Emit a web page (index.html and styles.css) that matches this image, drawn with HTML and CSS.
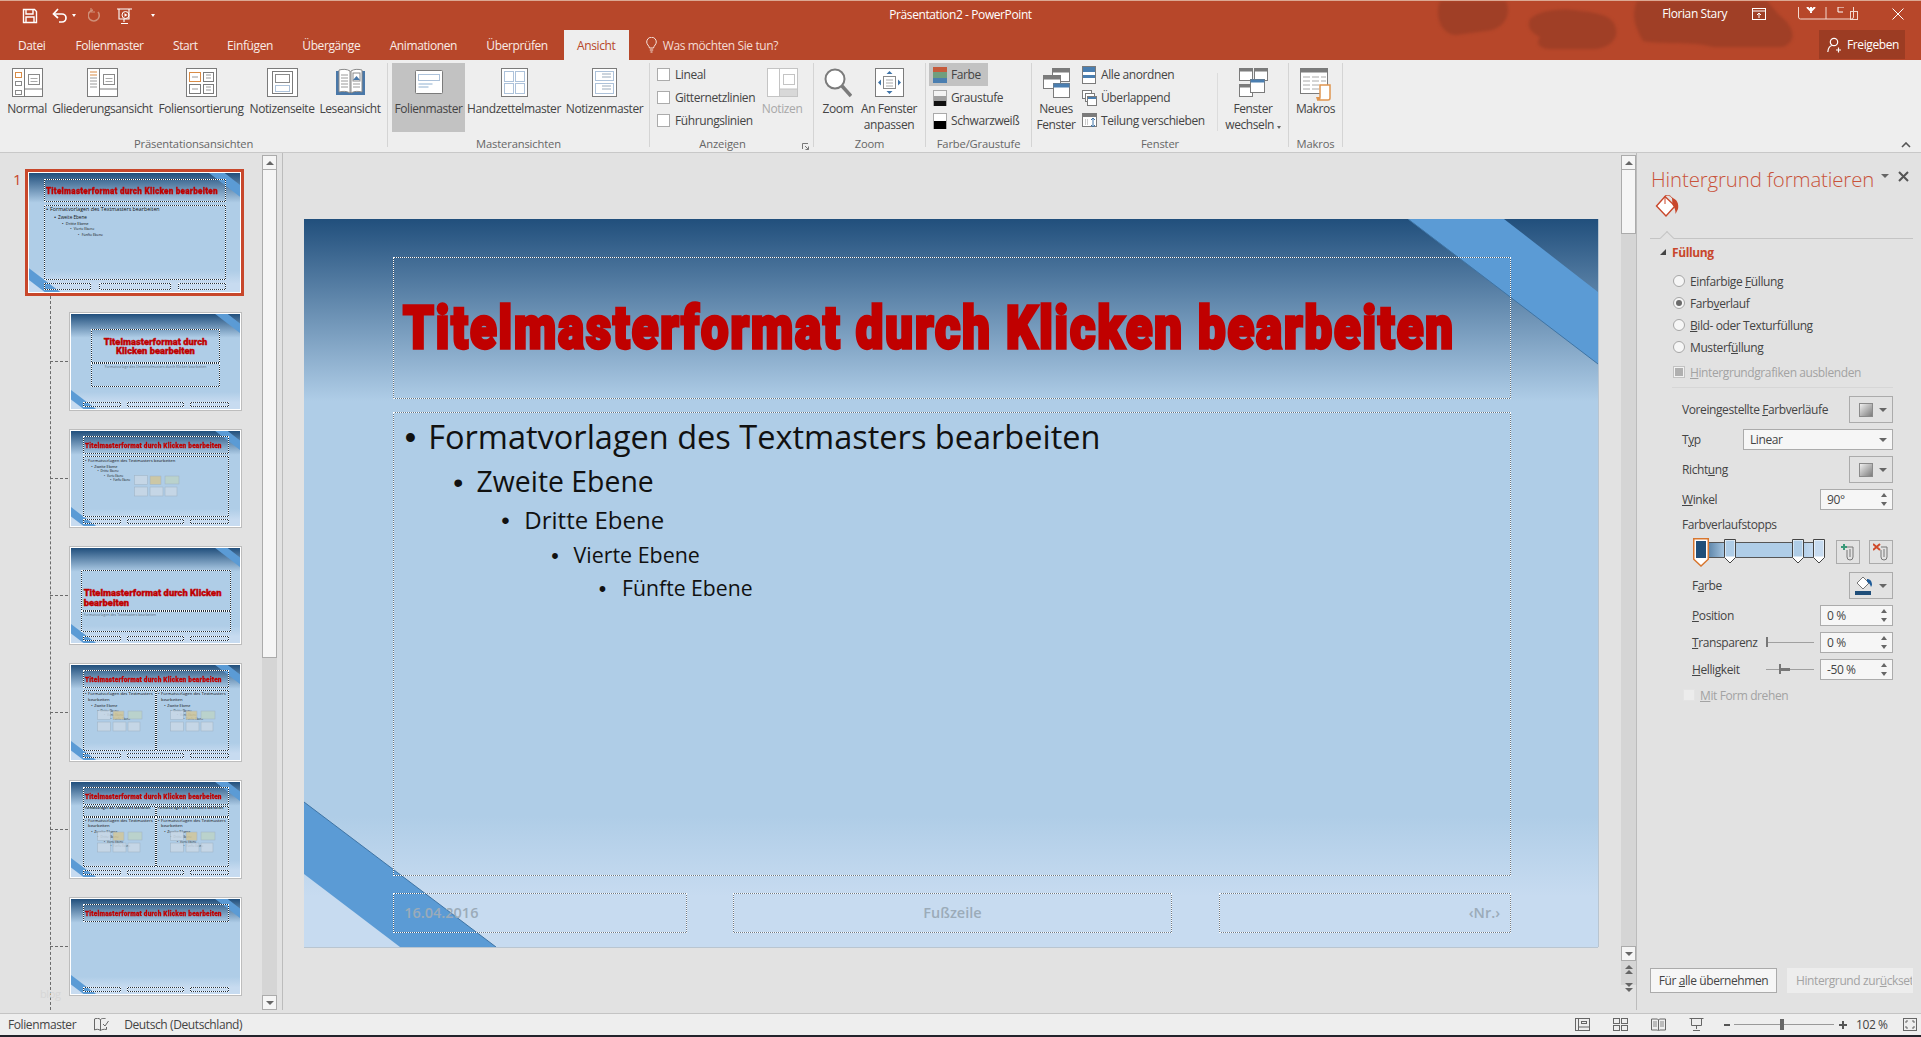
FILE: index.html
```html
<!DOCTYPE html>
<html lang="de">
<head>
<meta charset="utf-8">
<title>Präsentation2 - PowerPoint</title>
<link rel="stylesheet" href="styles.css">
</head>
<body>
<svg class="defs" width="0" height="0">
  <symbol id="ct" viewBox="0 0 46 22">
    <g fill="#c9d8e6" stroke="#9fb2c4" stroke-width=".6"><rect x=".5" y=".5" width="13" height="9"/><rect x="16" y="1" width="11" height="8.5" fill="#d2c79a"/><rect x="31" y="1" width="14" height="8" fill="#bcd3c8"/><rect x=".5" y="12" width="13" height="9"/><rect x="16" y="12" width="13" height="9"/><rect x="31" y="12" width="12" height="9"/></g>
  </symbol>
  <symbol id="bgico" viewBox="0 0 14 14"><defs><linearGradient id="gg" x1="0" y1="0" x2="1" y2="1"><stop offset="0" stop-color="#f4f4f4"/><stop offset="1" stop-color="#777"/></linearGradient></defs><rect x=".5" y=".5" width="13" height="13" fill="url(#gg)" stroke="#8a8a8a"/></symbol>
</svg>
<div class="app">
  <header class="titlebar">
    <svg class="clouds" viewBox="0 0 500 60" width="500" height="60"><g fill="#a03f26"><path d="M20 0h66c6 14-2 28-20 30L36 34C22 34 14 16 20 0z"/><path d="M110 18c8-8 30-12 50-8 22 2 34 6 36 18 2 10-6 18-20 20H128c-10-2-12-6-8-12-8-4-14-10-10-18z"/><path d="M217 0h130l12 14c14 10 20 26 4 32h-70c-20-6-50-2-70-6-8-14-12-26-6-40z"/></g></svg>
    <div class="row1">
      <div class="qat">
        <svg width="16" height="16" viewBox="0 0 16 16" class="q1"><path d="M1.500 1.500h11l2 2v11h-13z" fill="none" stroke="#fff" stroke-width="1.400"/><path d="M4 2v4h7V2M4 14.500V9h8v5.500" fill="none" stroke="#fff" stroke-width="1.400"/></svg>
        <svg width="16" height="15" viewBox="0 0 16 15" class="q2"><path d="M2 6h8a4 4 0 0 1 0 8H7" fill="none" stroke="#fff" stroke-width="1.700"/><path d="M6 1L1.500 6 6 10" fill="none" stroke="#fff" stroke-width="1.700"/></svg>
        <i class="tri w tiny q3"></i>
        <svg width="13" height="15" viewBox="0 0 13 15" class="q4"><path d="M10 4a5.500 5.500 0 1 1-5-2" fill="none" stroke="#cf8f78" stroke-width="1.600"/><path d="M3 0v4h4" fill="none" stroke="#cf8f78" stroke-width="1.200"/></svg>
        <svg width="18" height="18" viewBox="0 0 18 18" class="q5"><path d="M1 2h15M3 2v10h10V2M8 12v3M5 16.500h7" fill="none" stroke="#fff" stroke-width="1.100"/><circle cx="9.500" cy="8" r="3.500" fill="none" stroke="#fff"/><path d="M8.500 6.200L11.500 8l-3 1.800z" fill="#fff"/></svg>
        <i class="tri w tiny q6"></i>
      </div>
      <div class="doc-title">Präsentation2 - PowerPoint</div>
      <div class="account">
        <span class="user">Florian Stary</span>
        <svg width="14" height="12" viewBox="0 0 14 12" class="disp"><rect x=".5" y=".5" width="13" height="11" fill="none" stroke="#fff"/><path d="M.5 3h13M7 10V5M5 7l2-2 2 2" fill="none" stroke="#fff"/></svg>
        <svg width="70" height="14" viewBox="0 0 70 14" class="winc"><rect x=".5" y="-6" width="55" height="18" rx="2" fill="none" stroke="#f3d9cf"/><path d="M28 -2v14" stroke="#f3d9cf"/><path d="M13 0v6M9 0l4 4 4-4" stroke="#fff" stroke-width="2" fill="none"/><path d="M40 5V0h6M40 5h5" stroke="#fff" fill="none"/><rect x="52.500" y="4.500" width="7" height="8" fill="none" stroke="#f3d9cf"/></svg>
        <svg width="12" height="12" viewBox="0 0 12 12" class="closex"><path d="M.5.5l11 11M11.500.5l-11 11" stroke="#fff" fill="none"/></svg>
      </div>
    </div>
    <nav class="tabs">
      <span class="tab t-first">Datei</span>
      <span class="tab t-fm">Folienmaster</span>
      <span class="tab">Start</span>
      <span class="tab">Einfügen</span>
      <span class="tab">Übergänge</span>
      <span class="tab">Animationen</span>
      <span class="tab">Überprüfen</span>
      <span class="tab on">Ansicht</span>
      <span class="tell">
        <svg width="11" height="16" viewBox="0 0 11 16"><path d="M3.500 11C3 8.500.7 7.500.7 5a4.800 4.800 0 0 1 9.600 0c0 2.500-2.300 3.500-2.800 6zM3.800 13h3.400M4.500 15h2" fill="none" stroke="#f7e5de"/></svg>
        Was möchten Sie tun?
      </span>
      <span class="share">
        <svg width="15" height="16" viewBox="0 0 15 16"><circle cx="7" cy="5" r="3.700" fill="none" stroke="#fff" stroke-width="1.200"/><path d="M.8 15c.4-4 2.500-6.500 5-6.500M11.500 10.500v5M9 13h5" fill="none" stroke="#fff" stroke-width="1.200"/></svg>
        Freigeben
      </span>
    </nav>
  </header>

  <section class="ribbon">
    <div class="grp g1">
      <div class="grp-body cols c1">
        <div class="cmd"><svg class="ic" width="31" height="29" viewBox="0 0 31 29"><rect x=".5" y=".5" width="30" height="28" fill="#fff" stroke="#7b7b7b"/><path d="M12.500.5v28M12.500 21h18" stroke="#7b7b7b" fill="none"/><rect x="3.500" y="4.500" width="6" height="5" fill="none" stroke="#d98b45"/><rect x="3.500" y="13.500" width="6" height="4" fill="none" stroke="#8a8a8a"/><rect x="3.500" y="22.500" width="6" height="4" fill="none" stroke="#8a8a8a"/><rect x="16.500" y="6.500" width="11" height="10" fill="none" stroke="#8a8a8a"/><path d="M18.500 10.500h7M18.500 13.500h7" stroke="#aaa"/></svg><span>Normal</span></div>
        <div class="cmd"><svg class="ic" width="31" height="29" viewBox="0 0 31 29"><rect x=".5" y=".5" width="30" height="28" fill="#fff" stroke="#7b7b7b"/><path d="M12.500.5v28M12.500 21h18" stroke="#7b7b7b" fill="none"/><path d="M3 4h7M3 7h7" stroke="#d98b45"/><path d="M3 10h7M3 13h7M3 16h7M3 19h7" stroke="#9a9a9a"/><rect x="16.500" y="6.500" width="11" height="10" fill="none" stroke="#8a8a8a"/><path d="M18.500 10.500h7M18.500 13.500h7" stroke="#aaa"/></svg><span>Gliederungsansicht</span></div>
        <div class="cmd"><svg class="ic" width="31" height="29" viewBox="0 0 31 29"><rect x=".5" y=".5" width="30" height="28" fill="#fff" stroke="#7b7b7b"/><rect x="3.500" y="4.500" width="11" height="9" fill="none" stroke="#d98b45"/><rect x="17.500" y="4.500" width="10" height="9" fill="none" stroke="#7b7b7b"/><rect x="3.500" y="16.500" width="11" height="9" fill="none" stroke="#7b7b7b"/><rect x="17.500" y="16.500" width="10" height="9" fill="none" stroke="#7b7b7b"/><path d="M6 9h6M20 7h5M20 10h5M6 21h6M20 19h5M20 22h5" stroke="#999"/></svg><span>Foliensortierung</span></div>
        <div class="cmd"><svg class="ic" width="31" height="29" viewBox="0 0 31 29"><rect x=".5" y=".5" width="30" height="28" fill="#fff" stroke="#7b7b7b"/><rect x="5.500" y="3.500" width="20" height="22" fill="#fff" stroke="#7b7b7b"/><rect x="8.500" y="6.500" width="14" height="8" fill="none" stroke="#8a8a8a"/><path d="M8.500 17.500h14v6h-14z" fill="none" stroke="#5a85b5" stroke-dasharray="1 1"/></svg><span>Notizenseite</span></div>
        <div class="cmd"><svg class="ic" width="31" height="29" viewBox="0 0 31 29"><path d="M1 3h3v21h23V3h3v24H1z" fill="#4a78a8"/><path d="M4 2c4-1 8-1 11 1v22c-3-2-7-2-11-1zM16 3c3-2 7-2 11-1v22c-4-1-8-1-11 1z" fill="#fff" stroke="#8a8a8a"/><path d="M6 7h7M6 10h7M6 13h7M6 16h7M6 19h7M18 16h7M18 19h7" stroke="#9a9a9a"/><rect x="18" y="5" width="7" height="8" fill="#fff" stroke="#8a8a8a"/><path d="M18 12l3.500-4 3.500 4z" fill="#4a78a8"/></svg><span>Leseansicht</span></div>
      </div>
      <div class="grp-label">Präsentationsansichten</div>
    </div>

    <div class="grp g2">
      <div class="grp-body cols c2">
        <div class="cmd sel"><svg class="ic small" width="28" height="24" viewBox="0 0 28 24"><rect x=".5" y=".5" width="27" height="23" rx="1" fill="#fff" stroke="#7b7b7b"/><rect x="3.500" y="4.500" width="21" height="6" fill="none" stroke="#5a85b5" stroke-dasharray="1 1"/><path d="M3.500 14h14M3.500 17h10" stroke="#8fb0d0"/></svg><span>Folienmaster</span></div>
        <div class="cmd"><svg class="ic" width="27" height="29" viewBox="0 0 27 29"><rect x=".5" y=".5" width="26" height="28" fill="#fff" stroke="#7b7b7b"/><path d="M3.500 3.500h9v10h-9zM14.500 3.500h9v10h-9zM3.500 15.500h9v10h-9zM14.500 15.500h9v10h-9z" fill="none" stroke="#5a85b5" stroke-dasharray="1 1"/></svg><span>Handzettelmaster</span></div>
        <div class="cmd"><svg class="ic" width="25" height="29" viewBox="0 0 25 29"><rect x=".5" y=".5" width="24" height="28" fill="#fff" stroke="#7b7b7b"/><path d="M3.500 3.500h18v9h-18zM3.500 15.500h18v10h-18z" fill="none" stroke="#5a85b5" stroke-dasharray="1 1"/><path d="M10 6h9M10 9h9M10 18h9M10 21h9" stroke="#9ab"/></svg><span>Notizenmaster</span></div>
      </div>
      <div class="grp-label">Masteransichten</div>
    </div>

    <div class="grp g3">
      <div class="grp-body show">
        <div class="stack">
          <div class="li"><i class="cb"></i>Lineal</div>
          <div class="li"><i class="cb"></i>Gitternetzlinien</div>
          <div class="li"><i class="cb"></i>Führungslinien</div>
        </div>
        <div class="cmd off wn"><svg class="ic" width="31" height="29" viewBox="0 0 31 29"><rect x=".5" y=".5" width="30" height="28" fill="#fff" stroke="#c4c4c4"/><path d="M12.500.5v28" stroke="#c4c4c4"/><rect x="12.500" y="21" width="18" height="7.500" fill="#d8d8d8" stroke="#c4c4c4"/><rect x="16.500" y="6.500" width="11" height="10" fill="none" stroke="#c4c4c4"/></svg><span>Notizen</span></div>
      </div>
      <div class="grp-label lbl-3">Anzeigen<svg class="launch" width="7" height="7" viewBox="0 0 7 7"><path d="M.5 6V.5H6M3 3l3.500 3.500M6.500 3.500v3h-3" fill="none" stroke="#777"/></svg></div>
    </div>

    <div class="grp g4">
      <div class="grp-body cols c4">
        <div class="cmd"><svg class="ic" width="28" height="30" viewBox="0 0 28 30"><circle cx="11" cy="11" r="9.500" fill="#fff" stroke="#7b7b7b" stroke-width="2"/><path d="M18 18l9 10" stroke="#7b7b7b" stroke-width="3.500"/></svg><span>Zoom</span></div>
        <div class="cmd"><svg class="ic" width="29" height="29" viewBox="0 0 29 29"><rect x=".5" y=".5" width="28" height="28" fill="#fff" stroke="#7b7b7b"/><rect x="8.500" y="8.500" width="12" height="12" fill="none" stroke="#8a8a8a"/><path d="M11 12h7M11 15h7M11 18h7" stroke="#aaa"/><path d="M14.500 3l3 3h-6zM14.500 26l3-3h-6zM3 14.500l3-3v6zM26 14.500l-3-3v6z" fill="#3f74a8"/></svg><span>An Fenster<br>anpassen</span></div>
      </div>
      <div class="grp-label">Zoom</div>
    </div>

    <div class="grp g5">
      <div class="grp-body stack cstack">
        <div class="li pick on"><i class="sw sw-col"></i>Farbe</div>
        <div class="li pick"><i class="sw sw-gray"></i>Graustufe</div>
        <div class="li pick"><i class="sw sw-bw"></i>Schwarzweiß</div>
      </div>
      <div class="grp-label">Farbe/Graustufe</div>
    </div>

    <div class="grp g6">
      <div class="grp-body win">
        <div class="cmd wnf"><svg class="ic" width="27" height="30" viewBox="0 0 27 30"><rect x="9.500" y=".5" width="17" height="13" fill="#fff" stroke="#7b7b7b"/><rect x="9.500" y=".5" width="17" height="4" fill="#7b7b7b"/><rect x=".5" y="7.500" width="17" height="13" fill="#fff" stroke="#7b7b7b"/><rect x=".5" y="7.500" width="17" height="4" fill="#7b7b7b"/><rect x="10.500" y="15.500" width="16" height="14" fill="#fff" stroke="#7b7b7b"/><rect x="10.500" y="15.500" width="16" height="4" fill="#4a7eb0"/></svg><span>Neues<br>Fenster</span></div>
        <div class="stack wstack">
          <div class="li"><svg class="mi" width="14" height="18" viewBox="0 0 14 18"><rect x=".5" y=".5" width="13" height="17" fill="#fff" stroke="#7b7b7b"/><rect x="1" y="1" width="12" height="5" fill="#4a7eb0"/><rect x="1" y="9" width="12" height="3" fill="#4a7eb0"/></svg>Alle anordnen</div>
          <div class="li"><svg class="mi" width="15" height="16" viewBox="0 0 15 16"><rect x=".5" y=".5" width="9" height="8" fill="#fff" stroke="#7b7b7b"/><rect x="3.500" y="3.500" width="9" height="8" fill="#fff" stroke="#7b7b7b"/><rect x="5.500" y="6.500" width="9" height="9" fill="#fff" stroke="#7b7b7b"/><rect x="6" y="7" width="8" height="2" fill="#4a7eb0"/></svg>Überlappend</div>
          <div class="li"><svg class="mi" width="15" height="15" viewBox="0 0 15 15"><rect x=".5" y=".5" width="14" height="13" fill="#fff" stroke="#7b7b7b"/><rect x="1" y="1" width="13" height="3" fill="#7b7b7b"/><path d="M3 7h4M3 9h3M3 11h4" stroke="#9a9a9a" stroke-dasharray="1 1"/><path d="M11 5v9M9 7l2-2 2 2M9 12l2 2 2-2" stroke="#3f74a8" fill="none"/></svg>Teilung verschieben</div>
        </div>
        <i class="short-sep"></i>
        <div class="cmd wsw"><svg class="ic" width="29" height="29" viewBox="0 0 29 29"><rect x=".5" y=".5" width="13" height="12" fill="#fff" stroke="#7b7b7b"/><rect x=".5" y=".5" width="13" height="3" fill="#7b7b7b"/><rect x="15.500" y=".5" width="13" height="12" fill="#fff" stroke="#7b7b7b"/><rect x="15.500" y=".5" width="13" height="3" fill="#7b7b7b"/><rect x=".5" y="16.500" width="13" height="12" fill="#fff" stroke="#7b7b7b"/><rect x=".5" y="16.500" width="13" height="3" fill="#7b7b7b"/><rect x="11.500" y="11.500" width="14" height="13" fill="#fff" stroke="#7b7b7b"/><rect x="11.500" y="11.500" width="14" height="3" fill="#4a7eb0"/></svg><span>Fenster<br>wechseln <i class="tri tiny"></i></span></div>
      </div>
      <div class="grp-label">Fenster</div>
    </div>

    <div class="grp g7">
      <div class="grp-body cols c7">
        <div class="cmd"><svg class="ic" width="32" height="33" viewBox="0 0 32 33"><rect x=".5" y=".5" width="27" height="25" fill="#fff" stroke="#7b7b7b"/><rect x=".5" y=".5" width="27" height="4" fill="#7b7b7b"/><path d="M3 9h7M12 9h7M21 9h5M3 13h7M12 13h7M21 13h5M3 17h7M12 17h7M3 21h7M12 21h7" stroke="#aaa"/><path d="M20 17h10v13a2 2 0 0 1-2 2H17a3 3 0 0 0 3-3z" fill="#fff" stroke="#e0954f" stroke-width="1.500"/><path d="M16 29h4v3h-3z" fill="#e0954f"/></svg><span>Makros</span></div>
      </div>
      <div class="grp-label">Makros</div>
    </div>
    <svg class="collapse" width="10" height="6" viewBox="0 0 10 6"><path d="M1 5l4-4 4 4" fill="none" stroke="#555" stroke-width="1.600"/></svg>
  </section>

  <main class="work">
    <aside class="slides">
      <i class="tree"></i>
      <span class="ghost">blog</span>
      <div class="master-row">
        <span class="num">1</span>
        <div class="thumb-m">
          <div class="slide big">
            <svg class="deco" viewBox="0 0 1294 728" preserveAspectRatio="none"><path d="M1104 0h96l94 73v72z" fill="#5b9bd5"/><path d="M0 583l192 145H96L0 655z" fill="#5b9bd5"/></svg>
            <div class="ph p-title"><b class="ttl">Titelmasterformat durch Klicken bearbeiten</b></div>
            <div class="ph p-body"><div class="lv l1">Formatvorlagen des Textmasters bearbeiten</div><div class="lv l2">Zweite Ebene</div><div class="lv l3">Dritte Ebene</div><div class="lv l4">Vierte Ebene</div><div class="lv l5">Fünfte Ebene</div></div>
            <div class="ph p-date"></div><div class="ph p-foot"></div><div class="ph p-nr"></div>
          </div>
        </div>
      </div>

      <div class="thumb t-2">
        <div class="slide sm">
          <svg class="deco" viewBox="0 0 1294 728" preserveAspectRatio="none"><path d="M1104 0h96l94 73v72z" fill="#5b9bd5"/><path d="M0 583l192 145H96L0 655z" fill="#5b9bd5"/></svg>
          <div class="ph tt-title center"><b class="ttl">Titelmasterformat durch Klicken bearbeiten</b></div>
          <div class="ph tt-sub center"><span class="sub">Formatvorlage des Untertitelmasters durch Klicken bearbeiten</span></div>
          <div class="ph p-date"></div><div class="ph p-foot"></div><div class="ph p-nr"></div>
        </div>
      </div>

      <div class="thumb">
        <div class="slide sm">
          <svg class="deco" viewBox="0 0 1294 728" preserveAspectRatio="none"><path d="M1104 0h96l94 73v72z" fill="#5b9bd5"/><path d="M0 583l192 145H96L0 655z" fill="#5b9bd5"/></svg>
          <div class="ph p-title"><b class="ttl">Titelmasterformat durch Klicken bearbeiten</b></div>
          <div class="ph p-body"><div class="lv l1">Formatvorlagen des Textmasters bearbeiten</div><div class="lv l2">Zweite Ebene</div><div class="lv l3">Dritte Ebene</div><div class="lv l4">Vierte Ebene</div><div class="lv l5">Fünfte Ebene</div></div>
          <svg class="cticons one"><use href="#ct"/></svg>
          <div class="ph p-date"></div><div class="ph p-foot"></div><div class="ph p-nr"></div>
        </div>
      </div>

      <div class="thumb">
        <div class="slide sm">
          <svg class="deco" viewBox="0 0 1294 728" preserveAspectRatio="none"><path d="M1104 0h96l94 73v72z" fill="#5b9bd5"/><path d="M0 583l192 145H96L0 655z" fill="#5b9bd5"/></svg>
          <div class="ph sec-title"><b class="ttl">Titelmasterformat durch Klicken bearbeiten</b></div>
          <div class="ph sec-body"><span class="sub">Formatvorlagen des Textmasters bearbeiten</span></div>
          <div class="ph p-date"></div><div class="ph p-foot"></div><div class="ph p-nr"></div>
        </div>
      </div>

      <div class="thumb">
        <div class="slide sm">
          <svg class="deco" viewBox="0 0 1294 728" preserveAspectRatio="none"><path d="M1104 0h96l94 73v72z" fill="#5b9bd5"/><path d="M0 583l192 145H96L0 655z" fill="#5b9bd5"/></svg>
          <div class="ph p-title"><b class="ttl">Titelmasterformat durch Klicken bearbeiten</b></div>
          <div class="ph two-l"><div class="lv l1">Formatvorlagen des Textmasters bearbeiten</div><div class="lv l2">Zweite Ebene</div><div class="lv l3">Dritte Ebene</div><div class="lv l4">Vierte Ebene</div><div class="lv l5">Fünfte Ebene</div></div>
          <div class="ph two-r"><div class="lv l1">Formatvorlagen des Textmasters bearbeiten</div><div class="lv l2">Zweite Ebene</div><div class="lv l3">Dritte Ebene</div><div class="lv l4">Vierte Ebene</div><div class="lv l5">Fünfte Ebene</div></div>
          <svg class="cticons ctl"><use href="#ct"/></svg><svg class="cticons ctr"><use href="#ct"/></svg>
          <div class="ph p-date"></div><div class="ph p-foot"></div><div class="ph p-nr"></div>
        </div>
      </div>

      <div class="thumb">
        <div class="slide sm">
          <svg class="deco" viewBox="0 0 1294 728" preserveAspectRatio="none"><path d="M1104 0h96l94 73v72z" fill="#5b9bd5"/><path d="M0 583l192 145H96L0 655z" fill="#5b9bd5"/></svg>
          <div class="ph p-title"><b class="ttl">Titelmasterformat durch Klicken bearbeiten</b></div>
          <div class="ph cmp-hl"><span class="cmph">Formatvorlagen des Textmasters bearbeiten</span></div>
          <div class="ph cmp-hr"><span class="cmph">Formatvorlagen des Textmasters bearbeiten</span></div>
          <div class="ph cmp-l"><div class="lv l1">Formatvorlagen des Textmasters bearbeiten</div><div class="lv l2">Zweite Ebene</div><div class="lv l3">Dritte Ebene</div><div class="lv l4">Vierte Ebene</div><div class="lv l5">Fünfte Ebene</div></div>
          <div class="ph cmp-r"><div class="lv l1">Formatvorlagen des Textmasters bearbeiten</div><div class="lv l2">Zweite Ebene</div><div class="lv l3">Dritte Ebene</div><div class="lv l4">Vierte Ebene</div><div class="lv l5">Fünfte Ebene</div></div>
          <svg class="cticons ctl2"><use href="#ct"/></svg><svg class="cticons ctr2"><use href="#ct"/></svg>
          <div class="ph p-date"></div><div class="ph p-foot"></div><div class="ph p-nr"></div>
        </div>
      </div>

      <div class="thumb">
        <div class="slide sm">
          <svg class="deco" viewBox="0 0 1294 728" preserveAspectRatio="none"><path d="M1104 0h96l94 73v72z" fill="#5b9bd5"/><path d="M0 583l192 145H96L0 655z" fill="#5b9bd5"/></svg>
          <div class="ph p-title"><b class="ttl">Titelmasterformat durch Klicken bearbeiten</b></div>
          <div class="ph p-date"></div><div class="ph p-foot"></div><div class="ph p-nr"></div>
        </div>
      </div>
    </aside>

    <div class="vscroll vs1">
      <span class="sb up"><i class="tri up-t"></i></span>
      <span class="thumbbar th1"></span>
      <span class="sb dn"><i class="tri"></i></span>
    </div>

    <div class="editor">
      <div class="slide main-slide">
        <svg class="deco" viewBox="0 0 1294 728" preserveAspectRatio="none"><path d="M1104 0h96l94 73v72z" fill="#5b9bd5"/><path d="M1104 0l190 145" stroke="#3f74a4" fill="none"/><path d="M0 583l192 145H96L0 655z" fill="#5b9bd5"/><path d="M0 583l192 145" stroke="#3f74a4" fill="none"/></svg>
        <div class="ph p-title"><b class="ttl">Titelmasterformat durch Klicken bearbeiten</b></div>
        <div class="ph p-body"><div class="lv l1">Formatvorlagen des Textmasters bearbeiten</div><div class="lv l2">Zweite Ebene</div><div class="lv l3">Dritte Ebene</div><div class="lv l4">Vierte Ebene</div><div class="lv l5">Fünfte Ebene</div></div>
        <div class="ph p-date ftxt"><span>16.04.2016</span></div>
        <div class="ph p-foot ftxt mid"><span>Fußzeile</span></div>
        <div class="ph p-nr ftxt end"><span>‹Nr.›</span></div>
      </div>
    </div>

    <div class="vscroll vs2">
      <span class="sb up"><i class="tri up-t"></i></span>
      <span class="thumbbar th2"></span>
      <span class="sb dn"><i class="tri"></i></span>
      <span class="dbl"><i class="tri up-t"></i><i class="tri up-t"></i></span>
      <span class="dbl"><i class="tri"></i><i class="tri"></i></span>
    </div>

    <aside class="pane">
      <div class="pane-head"><span class="pane-title">Hintergrund formatieren</span><i class="tri pt"></i>
        <svg width="11" height="11" viewBox="0 0 11 11" class="pane-x"><path d="M1 1l9 9M10 1l-9 9" stroke="#555" stroke-width="2"/></svg></div>
      <svg class="bucket" width="26" height="24" viewBox="0 0 26 24"><path d="M10 1.500L1.500 11 11 21l9-10z" fill="#fff" stroke="#c8472b" stroke-width="1.400"/><path d="M10 1v8M10 1c3-2 6 0 8 3" fill="none" stroke="#c8472b"/><path d="M17 3c5 1 7 6 6 11l-2.500 5c0-4-.5-6-3-9z" fill="#c8472b"/></svg>
      <div class="tabline"></div>
      <div class="sect"><i class="corner"></i>Füllung</div>
      <div class="opts">
        <div class="opt"><i class="radio"></i><span>Einfarbige <u>F</u>üllung</span></div>
        <div class="opt"><i class="radio chk"></i><span>Farb<u>v</u>erlauf</span></div>
        <div class="opt"><i class="radio"></i><span><u>B</u>ild- oder Texturfüllung</span></div>
        <div class="opt"><i class="radio"></i><span>Musterf<u>ü</u>llung</span></div>
        <div class="opt dis chk-row"><i class="dcb"></i><span><u>H</u>intergrundgrafiken ausblenden</span></div>
      </div>
      <div class="pane-div"></div>
      <div class="row rb r-first"><span>Voreingestellte <u>F</u>arbverläufe</span><span class="pbtn"><svg width="14" height="14"><use href="#bgico"/></svg><i class="tri"></i></span></div>
      <div class="row rs"><span>T<u>y</u>p</span><span class="combo">Linear<i class="tri"></i></span></div>
      <div class="row rb"><span>Richt<u>u</u>ng</span><span class="pbtn"><svg width="14" height="14"><use href="#bgico"/></svg><i class="tri"></i></span></div>
      <div class="row rs"><span><u>W</u>inkel</span><span class="spin">90°<i class="arrows"><i class="tri up-t"></i><i class="tri"></i></i></span></div>
      <div class="row rl">Farbverlaufstopps</div>
      <div class="stops">
        <div class="bar"></div>
        <svg class="stop s1" width="16" height="29" viewBox="0 0 16 29"><path d="M.75.750h14.500v20.500L8 28 .75 21.250z" fill="#fff" stroke="#d8762e" stroke-width="1.500"/><rect x="3" y="3" width="10" height="17" fill="#1f4e79"/></svg>
        <svg class="stop s2" width="12" height="25" viewBox="0 0 12 25"><path d="M.5.500h11v18L6 24 .5 18.500z" fill="#fff" stroke="#444"/><rect x="1.500" y="1.500" width="9" height="16" fill="#afcde7"/></svg>
        <svg class="stop s3" width="12" height="25" viewBox="0 0 12 25"><path d="M.5.500h11v18L6 24 .5 18.500z" fill="#fff" stroke="#444"/><rect x="1.500" y="1.500" width="9" height="16" fill="#afcde7"/></svg>
        <svg class="stop s4" width="12" height="25" viewBox="0 0 12 25"><path d="M.5.500h11v18L6 24 .5 18.500z" fill="#fff" stroke="#444"/><rect x="1.500" y="1.500" width="9" height="16" fill="#c7dbf0"/></svg>
        <span class="clipbtn b-add"><svg width="16" height="18" viewBox="0 0 16 18"><path d="M7 4h6v10a3 3 0 0 1-6 0V7M10 6v8" fill="none" stroke="#777"/><path d="M1 4h6M4 1v6" stroke="#3a9a7a" stroke-width="2"/></svg></span>
        <span class="clipbtn b-del"><svg width="16" height="18" viewBox="0 0 16 18"><path d="M8 4h6v10a3 3 0 0 1-6 0V7M11 6v8" fill="none" stroke="#777"/><path d="M0 1l7 6M7 1L0 7" stroke="#d04a2a" stroke-width="2"/></svg></span>
      </div>
      <div class="row rb ind"><span>F<u>a</u>rbe</span><span class="pbtn"><svg width="18" height="20" viewBox="0 0 18 20"><path d="M8 1L2 7l6 6 6-6z" fill="#fff" stroke="#777"/><path d="M12 3c3 0 5 2 5 6l-1 2c-1-3-2-4-4-5z" fill="#1f5c99"/><rect x="0" y="15" width="16" height="4" fill="#1f4e79"/></svg><i class="tri"></i></span></div>
      <div class="row rs ind"><span><u>P</u>osition</span><span class="spin">0 %<i class="arrows"><i class="tri up-t"></i><i class="tri"></i></i></span></div>
      <div class="row rs ind"><span><u>T</u>ransparenz</span><span class="sl-wrap"><i class="slider"><i class="knob k0"></i></i><span class="spin">0 %<i class="arrows"><i class="tri up-t"></i><i class="tri"></i></i></span></span></div>
      <div class="row rs ind"><span><u>H</u>elligkeit</span><span class="sl-wrap"><i class="slider"><i class="fillbar"></i><i class="knob k1"></i></i><span class="spin">-50 %<i class="arrows"><i class="tri up-t"></i><i class="tri"></i></i></span></span></div>
      <div class="row rm dis"><i class="dcb2"></i><span><u>M</u>it Form drehen</span></div>
      <div class="pane-foot">
        <span class="btn"><span>Für <u>a</u>lle übernehmen</span></span>
        <span class="btn dbtn"><span>Hintergrund zur<u>ü</u>cksetzen</span></span>
      </div>
    </aside>
  </main>

  <footer class="status">
    <span class="st-l">Folienmaster</span>
    <svg class="st-book" width="15" height="13" viewBox="0 0 15 13"><path d="M.5 1c2-1 4-1 6 .5v11c-2-1.500-4-1.500-6-.5zM6.500 1.500c1-1 3-1.500 5-1" fill="none" stroke="#666"/><path d="M9 6l2 2 3.500-5M6.500 12.500c1.500-1 3-1.500 6-1V9" fill="none" stroke="#666"/></svg>
    <span class="st-lang">Deutsch (Deutschland)</span>
    <span class="st-right">
      <svg width="15" height="13" viewBox="0 0 15 13"><rect x=".5" y=".5" width="14" height="12" fill="none" stroke="#666"/><path d="M3.500.5v12M3.500 9h11" stroke="#666"/><rect x="6.500" y="3.500" width="5" height="2" fill="none" stroke="#666"/></svg>
      <svg width="15" height="13" viewBox="0 0 15 13" class="si2"><rect x=".5" y=".5" width="6" height="5" fill="none" stroke="#666"/><rect x="8.500" y=".5" width="6" height="5" fill="none" stroke="#666"/><rect x=".5" y="7.500" width="6" height="5" fill="none" stroke="#666"/><rect x="8.500" y="7.500" width="6" height="5" fill="none" stroke="#666"/></svg>
      <svg width="15" height="13" viewBox="0 0 15 13" class="si2"><path d="M.5 1h6l1 1 1-1h6v11h-6l-1 1-1-1h-6zM7.500 2v10" fill="none" stroke="#666"/><path d="M2 4h4M2 6h4M2 8h4M9 4h4M9 6h4M9 8h4" stroke="#888"/></svg>
      <svg width="15" height="13" viewBox="0 0 15 13" class="si2"><path d="M.5.500h14M2.500.5v7h10v-7M7.500 8v3M4 12.500h7" fill="none" stroke="#666"/></svg>
      <i class="zm"></i>
      <i class="ztrack"><i class="zknob"></i></i>
      <i class="zp"></i>
      <span class="zpct">102 %</span>
      <svg width="14" height="13" viewBox="0 0 14 13" class="sifit"><rect x=".5" y=".5" width="13" height="12" fill="none" stroke="#666"/><path d="M3 3h2M3 3v2M11 3H9M11 3v2M3 10h2M3 10V8M11 10H9M11 10V8" stroke="#666"/></svg>
    </span>
  </footer>
</div>
</body>
</html>
```
FILE: styles.css
```css
* { box-sizing: border-box; }
html, body { margin: 0; height: 100%; overflow: hidden; }
body { font-family: "Open Sans", "Liberation Sans", sans-serif; font-size: 12px; color: #444; background: #e2e2e2; }
i { font-style: normal; }
u { text-decoration: underline; text-underline-offset: 1px; }
.defs { position: absolute; }
.app { width: 1921px; height: 1037px; display: flex; flex-direction: column; letter-spacing: -.4px; }

/* arrows */
.tri { display: inline-block; width: 0; height: 0; border-left: 4px solid transparent; border-right: 4px solid transparent; border-top: 4px solid #666; }
.tri.up-t { border-top: 0; border-bottom: 4px solid #666; }
.tri.tiny { border-left-width: 2.5px; border-right-width: 2.5px; border-top-width: 3px; }
.tri.w { border-top-color: #fff; }

/* title bar */
.titlebar { position: relative; height: 60px; background: #b7472a; border-top: 1px solid #dba893; color: #fff; flex: none; overflow: hidden; }
.clouds { position: absolute; left: 1420px; top: 0; filter: blur(1.5px); }
.row1 { position: relative; height: 29px; display: grid; grid-template-columns: 1fr auto 1fr; align-items: center; }
.qat { display: flex; align-items: center; padding-left: 22px; }
.q2 { margin-left: 14px; }
.q3 { margin-left: 4px; }
.q4 { margin-left: 12px; }
.q5 { margin-left: 15px; }
.q6 { margin-left: 17px; }
.doc-title { font-size: 12px; text-align: center; transform: translateY(-1px); }
.account { display: flex; align-items: center; justify-content: flex-end; padding-right: 17px; }
.user { margin-right: 25px; font-size: 12px; transform: translateY(-2px); }
.disp { margin-right: 32px; transform: translateY(-2px); }
.winc { margin-right: 24px; align-self: flex-start; }
.closex { transform: translateY(-2px); }
.tabs { position: relative; height: 30px; display: flex; align-items: stretch; font-size: 12px; padding-left: 2px; }
.tab { display: flex; align-items: center; padding: 0 14.700px; color: #f9ece7; }
.t-first { padding: 0 15px 0 16px; }
.t-fm { padding-left: 15px; }
.tab.on { background: #eeeeee; color: #b7472a; margin-left: 1px; padding: 0 13.500px; }
.tell { display: flex; align-items: center; gap: 6px; margin-left: 17px; color: #f4dcd4; }
.share { position: absolute; left: 1819px; top: 0; width: 86px; height: 29px; display: flex; align-items: center; gap: 5px; padding-left: 8px; background: #9c3c23; color: #fff; }

/* ribbon */
.ribbon { position: relative; height: 93px; flex: none; display: flex; background: #eeeeee; border-bottom: 1px solid #c8c8c8; padding-top: 3px; color: #444; }
.grp { position: relative; display: flex; flex-direction: column; border-right: 1px solid #d4d4d4; height: 84px; }
.grp-body { height: 72px; flex: none; }
.grp-label { position: relative; height: 18px; flex: none; line-height: 18px; text-align: center; font-size: 11.200px; color: #666; letter-spacing: -.15px; }
.lbl-3 { padding-right: 18px; }
.g1 { width: 388px; } .g2 { width: 262px; } .g3 { width: 164px; } .g4 { width: 112px; } .g5 { width: 106px; } .g6 { width: 257px; } .g7 { width: 54px; }
.cols { display: grid; }
.c1 { grid-template-columns: 46px 105px 92px 70px 66px; padding-left: 4px; }
.c2 { grid-template-columns: 73px 98px 83px; padding-left: 4px; }
.c4 { grid-template-columns: 40px 62px; padding-left: 4px; }
.c7 { grid-template-columns: 1fr; }
.cmd { display: flex; flex-direction: column; align-items: center; text-align: center; white-space: nowrap; line-height: 16px; height: 69px; padding-top: 5px; position: relative; }
.cmd span { position: absolute; top: 38px; left: -10px; right: -10px; }
.cmd.sel { background: #c2c2c2; }
.cmd.sel .ic { margin-top: 2px; }
.cmd.off { color: #a8a8a8; }
.ic { display: block; flex: none; }
.show { display: flex; padding-left: 7px; }
.stack { display: flex; flex-direction: column; }
.li { display: flex; align-items: center; height: 23px; white-space: nowrap; }
.cb { width: 13px; height: 13px; border: 1px solid #ababab; background: #fff; margin-right: 5px; }
.wn { width: 44px; margin-left: 5px; }
.cstack { padding: 0 0 0 3px; }
.pick { width: 59px; padding-left: 4px; gap: 4px; }
.pick:nth-child(n+2) { width: auto; }
.pick.on { background: #c2c2c2; }
.sw { width: 14px; height: 16px; flex: none; border: 0; }
.sw-col { background: linear-gradient(180deg, #c65b3c 0 33%, #6f9e7e 33% 66%, #4a7eb0 66%); }
.sw-gray { background: linear-gradient(180deg, #f4f4f4 0 33%, #a0a0a0 33% 66%, #111 66%); border: 1px solid #aaa; border-width: 1px 1px 0; }
.sw-bw { background: linear-gradient(180deg, #fff 0 50%, #000 50%); border: 1px solid #aaa; border-width: 1px 1px 0; }
.win { display: flex; position: relative; }
.wnf { width: 48px; flex: none; }
.wstack { margin-left: 2px; }
.mi { margin-right: 4px; flex: none; }
.wstack .li:first-child .mi { margin-right: 5px; }
.short-sep { position: absolute; left: 185px; top: 10px; height: 58px; width: 1px; background: #dcdcdc; }
.wsw { position: absolute; left: 189px; width: 64px; }
.launch { position: absolute; right: 4px; bottom: 3px; }
.collapse { position: absolute; right: 10px; bottom: 4px; }

/* workspace */
.work { position: relative; flex: 1; display: flex; min-height: 0; background: #e2e2e2; }
.slides { position: relative; width: 262px; flex: none; overflow: hidden; padding-top: 16px; }
.tree { position: absolute; left: 50px; top: 143px; bottom: 3px; border-left: 1px dashed #6b6b6b; }
.ghost { position: absolute; left: 40px; top: 833px; color: #d6d6d6; font-size: 11px; }
.master-row { display: flex; height: 127px; position: relative; }
.num { width: 25px; padding: 2px 0 0 13px; font-size: 15px; line-height: 16px; color: #c8472b; }
.thumb-m { width: 219px; height: 127px; border: 3px solid #c8472b; padding: 1px; background: #fff; }
.thumb { position: relative; width: 173px; height: 99px; margin: 18px 0 0 69px; border: 1px solid #bdbdbd; padding: 1px; background: #fff; }
.t-2 { margin-top: 16px; }
.thumb::before { content: ""; position: absolute; left: -20px; top: 48px; width: 18px; border-top: 1px dashed #6b6b6b; }

/* slide */
.slide { position: relative; overflow: hidden; background: linear-gradient(180deg, #214f7c 0, #afcde7 25%, #afcde7 82%, #c7dbf0 93%, #c7dbf0 100%); }
.big { width: 100%; height: 100%; font-size: 9.800px; }
.sm { width: 100%; height: 100%; font-size: 7.800px; }
.main-slide { width: 1294px; height: 728px; font-size: 60px; margin: 66px 0 0 21px; box-shadow: 1px 0 0 #b9c5d0, 0 1px 0 #b9c5d0; }
.deco { position: absolute; left: 0; top: 0; width: 100%; height: 100%; }
.ph { position: absolute; border: 1px solid rgba(50, 55, 60, .6); overflow: visible; line-height: 1.2; }
.ph::before { content: ""; position: absolute; inset: -1px; border: 1px dotted #fff; pointer-events: none; }
.sm .ph, .big .ph { border-color: #22303c; }
.p-title { left: 6.880%; top: 5.220%; width: 86.400%; height: 19.500%; display: flex; align-items: center; padding-left: .15em; }
.p-body { left: 6.880%; top: 26.500%; width: 86.400%; height: 63.700%; padding-top: .055em; }
.p-date { left: 6.880%; top: 92.580%; width: 22.720%; height: 5.500%; }
.p-foot { left: 33.150%; top: 92.580%; width: 33.930%; height: 5.500%; }
.p-nr { left: 70.710%; top: 92.580%; width: 22.570%; height: 5.500%; }
.ttl { display: inline-block; font-family: Roboto, "Liberation Sans", sans-serif; font-weight: 900; font-size: 1em; color: #c00000; white-space: nowrap; letter-spacing: .04em; -webkit-text-stroke: .055em #c00000; transform: scaleX(.815); transform-origin: left center; }
.lv { position: relative; color: #111; white-space: nowrap; letter-spacing: 0; }
.lv::before { content: "•"; display: inline-block; text-indent: 0; font-family: "Liberation Sans", sans-serif; line-height: 1; }
.l1 { font-size: .542em; line-height: 1.3; padding-left: 1.050em; text-indent: -.720em; }
.l1::before { width: .720em; }
.l2 { font-size: .473em; line-height: 1.36; margin-top: .13em; padding-left: 2.910em; text-indent: -.820em; }
.l2::before { width: .820em; }
.l3 { font-size: .400em; line-height: 1.4; margin-top: .08em; padding-left: 5.430em; text-indent: -.960em; }
.l3::before { width: .960em; }
.l4 { font-size: .357em; line-height: 1.6; margin-top: .08em; padding-left: 8.380em; text-indent: -1.040em; }
.l4::before { width: 1.040em; }
.l5 { font-size: .353em; line-height: 1.6; margin-top: -.05em; padding-left: 10.770em; text-indent: -1.100em; }
.l5::before { width: 1.100em; }
.ftxt { display: flex; align-items: center; padding: 0 .15em; font-size: 14.500px; font-weight: 600; color: #9babb9; letter-spacing: 0; }
.ftxt.mid { justify-content: center; }
.ftxt.end { justify-content: flex-end; padding-right: 10px; }
.p-date.ftxt { padding-left: .7em; }
.sm .ttl, .big .ttl { -webkit-text-stroke: .04em #c00000; }
.center { text-align: center; justify-content: center; }
.tt-title { left: 12%; top: 16%; width: 76%; height: 36%; display: flex; align-items: center; font-size: 1.300em; line-height: 1.05; }
.tt-title .ttl { white-space: normal; width: 100%; transform: none; font-size: .920em; letter-spacing: 0; }
.tt-sub { left: 12%; top: 52%; width: 76%; height: 25%; display: block; }
.sub { display: block; font-size: .450em; color: #5c6d7e; white-space: nowrap; padding-top: .3em; letter-spacing: 0; }
.sec-title { left: 6%; top: 23%; width: 88.700%; height: 43%; display: flex; align-items: flex-end; padding: 0 0 .2em .2em; line-height: 1.1; }
.sec-title .ttl { white-space: normal; width: 100%; transform: none; font-size: 1.200em; letter-spacing: 0; }
.sec-body { left: 6%; top: 66%; width: 88.700%; height: 22%; padding-left: .2em; }
.two-l, .cmp-l { left: 6.880%; width: 43.200%; }
.two-r, .cmp-r { left: 50.080%; width: 43.200%; }
.two-l, .two-r { top: 26.500%; height: 63.700%; }
.cmp-hl, .cmp-hr { top: 25.500%; height: 11%; }
.cmp-hl { left: 6.880%; width: 43.200%; }
.cmp-hr { left: 50.080%; width: 43.200%; }
.cmp-l, .cmp-r { top: 36.500%; height: 53%; }
.cmph { display: block; font-size: .380em; font-weight: 700; color: #2a3a4a; white-space: normal; padding-left: .4em; line-height: 1.050; letter-spacing: 0; }
.two-l .lv, .two-r .lv, .cmp-l .lv, .cmp-r .lv { white-space: normal; }
.cticons { position: absolute; opacity: .85; width: 46px; height: 22px; }
.one { left: 37%; top: 27%; margin-top: 18px; }
.ctl { left: 26px; top: 45px; }
.ctr { left: 99px; top: 45px; }
.ctl2 { left: 26px; top: 49px; }
.ctr2 { left: 99px; top: 49px; }

/* scrollbars */
.vscroll { position: relative; width: 15px; flex: none; margin-top: 2px; height: 855px; background: #d5d5d5; display: flex; flex-direction: column; }
.sb { height: 15px; flex: none; background: #f5f5f5; border: 1px solid #ababab; display: flex; align-items: center; justify-content: center; }
.thumbbar { display: block; background: #f5f5f5; border: 1px solid #ababab; border-top: 0; flex: none; }
.th1 { height: 488px; }
.th2 { height: 64px; }
.vs1 .dn { margin-top: auto; }
.vs2 { height: 830px; margin-left: 1px; margin-right: 0; }
.vs2 .dn { position: absolute; top: 791px; left: 0; width: 15px; }
.dbl { position: absolute; left: 3px; width: 9px; height: 10px; display: flex; flex-direction: column; align-items: center; justify-content: center; gap: 1px; }
.dbl:nth-of-type(4) { top: 809px; }
.dbl:nth-of-type(5) { top: 827px; }
.editor { width: 1338px; margin-left: 5px; flex: none; border-left: 1px solid #bcbcbc; height: 857px; }

/* pane */
.pane { position: relative; width: 285px; flex: none; height: 857px; border-left: 1px solid #bcbcbc; display: flex; flex-direction: column; }
.pane-head { position: relative; height: 26px; margin: 13px 0 0 14px; display: flex; align-items: center; white-space: nowrap; letter-spacing: 0; }
.pane-title { font-size: 20.400px; font-weight: 300; color: #c9533a; letter-spacing: -.12px; }
.pt { margin-left: 7px; transform: translateY(-3px); }
.pane-x { margin-left: 9px; transform: translateY(-3px); }
.bucket { margin: 3px 0 0 18px; display: block; flex: none; }
.tabline { position: relative; height: 1px; margin: 19px 8px 0 13px; background: #c4c4c4; flex: none; }
.tabline::after { content: ""; position: absolute; left: 12px; top: -5px; width: 9px; height: 9px; background: #e2e2e2; border-left: 1px solid #c4c4c4; border-top: 1px solid #c4c4c4; transform: rotate(45deg); }
.sect { height: 18px; margin: 4px 0 0 35px; display: flex; align-items: center; font-weight: 700; color: #c8472b; position: relative; flex: none; }
.corner { position: absolute; left: -12px; top: 6px; border-left: 6px solid transparent; border-bottom: 6px solid #444; }
.opts { margin: 9px 0 0 36px; flex: none; }
.opt { height: 22px; display: flex; align-items: center; gap: 5px; white-space: nowrap; }
.radio { width: 12px; height: 12px; margin-left: 0; border-radius: 50%; border: 1px solid #a6a6a6; background: #f6f6f6; display: flex; align-items: center; justify-content: center; flex: none; }
.radio.chk::after { content: ""; width: 6px; height: 6px; border-radius: 50%; background: #6a6a6a; }
.dis { color: #a3a3a3; }
.chk-row { margin-top: 3px; }
.dcb { width: 12px; height: 12px; border: 1px solid #c2c2c2; background: #f2f2f2; padding: 1.500px; flex: none; background-image: linear-gradient(#b0b0b0, #b0b0b0); background-size: 8px 8px; background-position: center; background-repeat: no-repeat; }
.dcb2 { width: 12px; height: 12px; background: #ececec; border: 1px solid #e4e4e4; flex: none; margin-right: 5px; }
.pane-div { height: 1px; background: #d6d6d6; margin: 4px 28px 0 35px; flex: none; }
.row { display: flex; align-items: center; justify-content: space-between; margin-top: 6px; padding: 0 28px 0 45px; white-space: nowrap; flex: none; }
.ind { padding-left: 55px; }
.rb { height: 27px; }
.rs { height: 21px; }
.rl { height: 18px; margin-top: 5px; justify-content: flex-start; }
.rm { height: 22px; margin-top: 4px; justify-content: flex-start; padding-left: 46px; }
.r-first { margin-top: 8px; }
.pbtn { width: 44px; height: 27px; border: 1px solid #ababab; display: flex; align-items: center; justify-content: flex-end; gap: 6px; padding-right: 5px; }
.combo { width: 150px; height: 21px; border: 1px solid #ababab; background: #f6f6f6; display: flex; align-items: center; justify-content: space-between; padding: 0 5px 0 6px; }
.spin { position: relative; width: 73px; height: 21px; border: 1px solid #ababab; background: #f6f6f6; display: flex; align-items: center; padding-left: 6px; flex: none; }
.arrows { position: absolute; right: 5px; top: 3px; display: flex; flex-direction: column; gap: 5px; }
.arrows .tri { border-left-width: 3px; border-right-width: 3px; }
.sl-wrap { display: flex; align-items: center; gap: 6px; }
.slider { position: relative; width: 48px; height: 1px; background: #a0a0a0; display: block; }
.knob { position: absolute; top: -5px; width: 2px; height: 10px; background: #777; }
.k0 { left: 0; } .k1 { left: 13px; }
.fillbar { position: absolute; left: 13px; top: -1px; width: 11px; height: 3px; background: #777; }
.stops { position: relative; height: 28px; margin: 5px 0 0 56px; flex: none; }
.bar { position: absolute; left: 0; top: 4px; width: 132px; height: 16px; border: 1px solid #555; background: linear-gradient(90deg, #1f4e79 0, #afcde7 25%, #afcde7 82%, #c7dbf0 93%); }
.stop { position: absolute; top: 1px; }
.s1 { left: 0; top: 0; }
.s2 { left: 31px; }
.s3 { left: 99px; }
.s4 { left: 120px; }
.clipbtn { position: absolute; top: 2px; width: 24px; height: 24px; border: 1px solid #ababab; display: flex; align-items: center; justify-content: center; }
.b-add { left: 143px; }
.b-del { left: 176px; }
.pane-foot { margin-top: auto; padding: 0 8px 17px 13px; display: flex; gap: 10px; }
.btn { width: 127px; height: 25px; border: 1px solid #ababab; background: #f6f6f6; display: flex; align-items: center; justify-content: center; white-space: nowrap; overflow: hidden; flex: none; }
.dbtn { width: 126px; background: #ededed; border-color: #ededed; color: #a3a3a3; justify-content: flex-start; padding-left: 8px; }

/* status */
.status { position: relative; height: 24px; flex: none; background: #eeeeee; border-top: 1px solid #c4c4c4; border-bottom: 2px solid #23232b; display: flex; align-items: center; padding: 0 0 1px 8px; color: #444; }
.st-book { margin-left: 18px; }
.st-lang { margin-left: 15px; }
.st-right { position: absolute; left: 1575px; top: 0; height: 21px; display: flex; align-items: center; }
.si2 { margin-left: 23px; }
.zm { margin-left: 20px; width: 6px; height: 2px; background: #555; }
.ztrack { position: relative; margin-left: 4px; width: 100px; height: 1px; background: #999; display: block; }
.zknob { position: absolute; left: 46px; top: -5px; width: 4px; height: 11px; background: #666; }
.zp { position: relative; margin-left: 5px; width: 8px; height: 2px; background: #555; }
.zp::after { content: ""; position: absolute; left: 3px; top: -3px; width: 2px; height: 8px; background: #555; }
.zpct { margin-left: 9px; }
.sifit { margin-left: 15px; }
```
